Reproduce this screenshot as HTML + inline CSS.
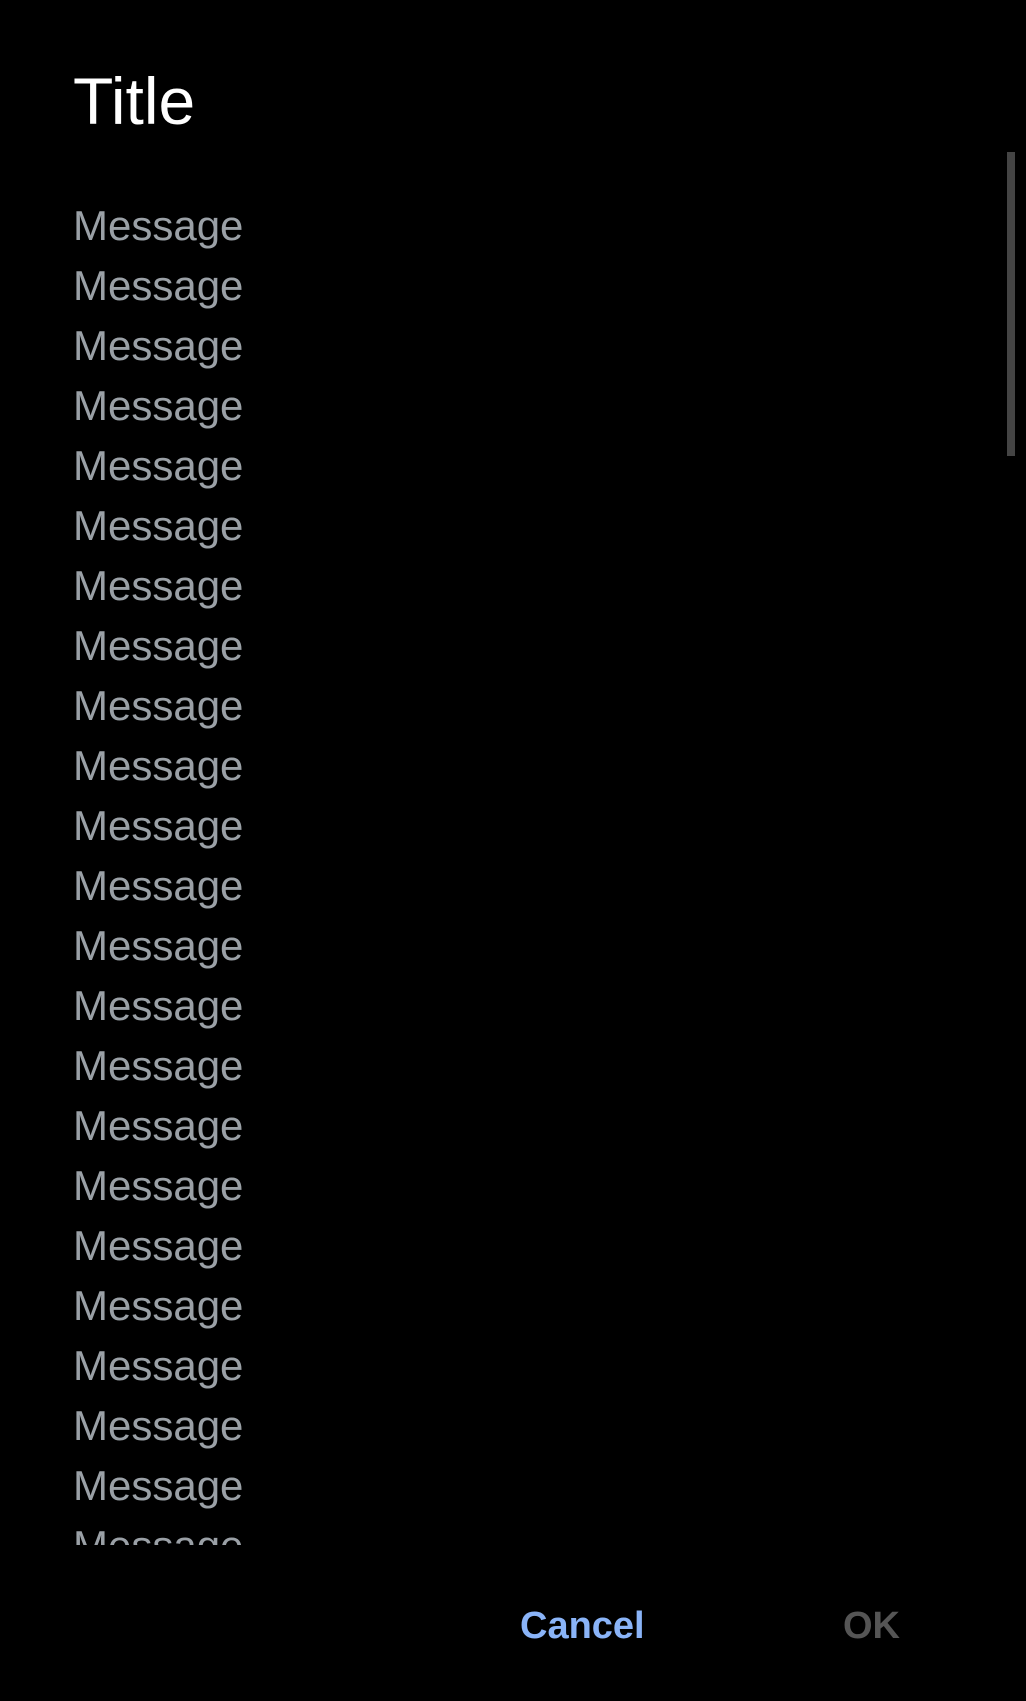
<!DOCTYPE html>
<html><head><meta charset="utf-8"><style>
html,body{margin:0;padding:0;background:#000;width:1026px;height:1701px;overflow:hidden;font-family:"Liberation Sans",sans-serif}
.t{position:absolute;left:73px;top:68px;font-size:66px;line-height:66px;color:#fff}
.msgs{position:absolute;left:73px;top:196px;height:1349px;overflow:hidden;width:800px}
.msgs div{font-size:42px;line-height:60px;height:60px;color:#9aa0a6}
.sb{position:absolute;left:1007px;top:152px;width:8px;height:304px;background:#444}
.b{position:absolute;top:1607px;font-size:38px;line-height:38px;font-weight:bold}
</style></head><body>
<div class="t">Title</div>
<div class="sb"></div>
<div class="msgs">
<div>Message</div><div>Message</div><div>Message</div><div>Message</div><div>Message</div><div>Message</div><div>Message</div><div>Message</div><div>Message</div><div>Message</div><div>Message</div><div>Message</div><div>Message</div><div>Message</div><div>Message</div><div>Message</div><div>Message</div><div>Message</div><div>Message</div><div>Message</div><div>Message</div><div>Message</div><div>Message</div><div>Message</div>
</div>
<div class="b" style="left:520px;color:#8ab4f8">Cancel</div>
<div class="b" style="left:843px;color:#555">OK</div>
</body></html>
